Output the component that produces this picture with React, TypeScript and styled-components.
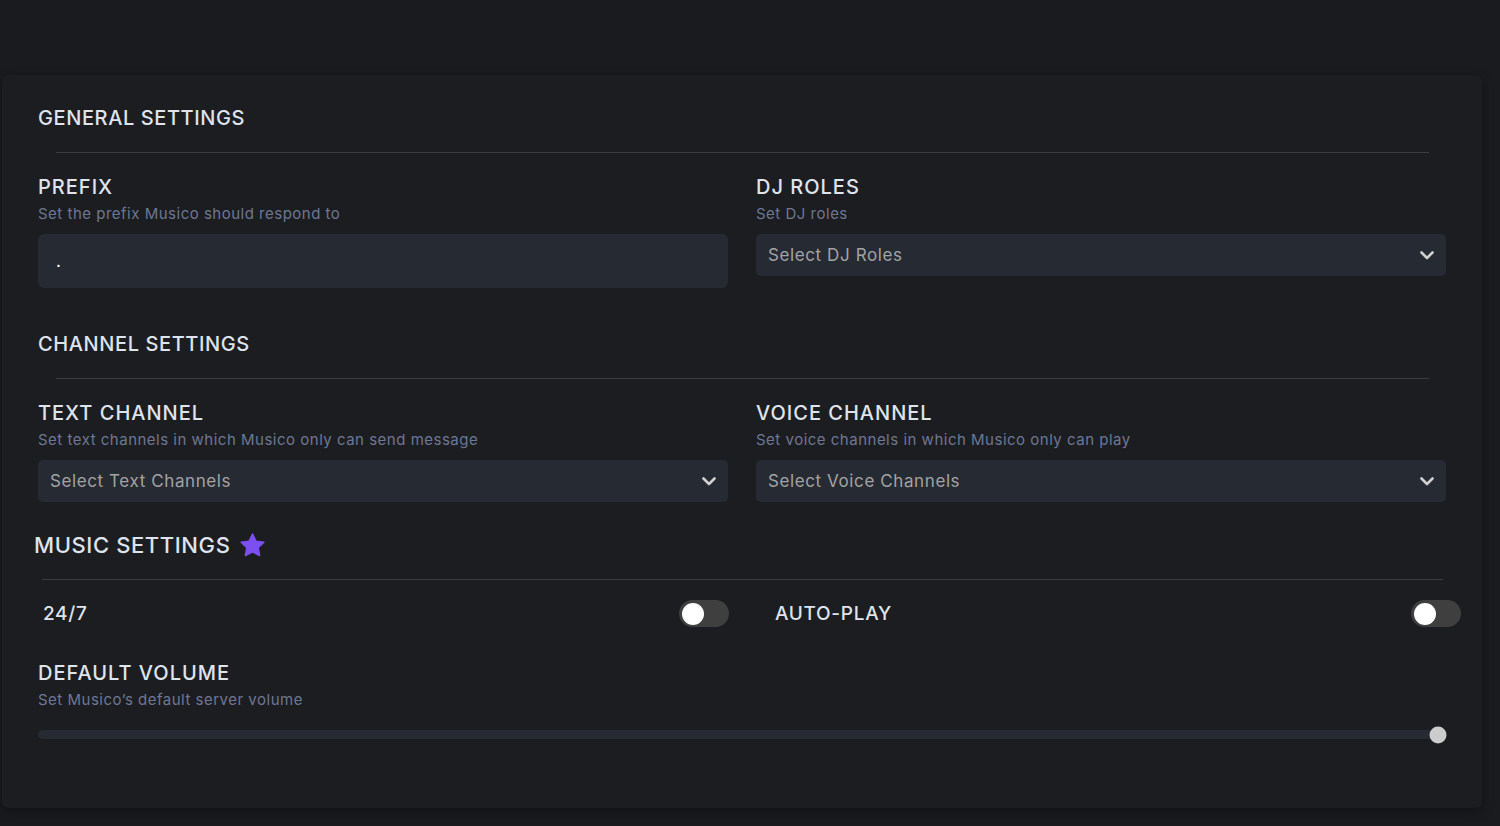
import React from "react";
import styled, { createGlobalStyle } from "styled-components";

const GlobalStyle = createGlobalStyle`
  body {
    margin: 0;
    background: #1a1b1f;
    font-family: "Inter", "Noto Sans", sans-serif;
  }
`;

function Chevron(): JSX.Element {
  return (
    <svg width="14" height="9" viewBox="0 0 14 9" fill="none">
      <path
        d="M1.5 1.5L7 7L12.5 1.5"
        stroke="#d0d0d0"
        strokeWidth="2.6"
        strokeLinecap="round"
        strokeLinejoin="round"
      />
    </svg>
  );
}

function Star(): JSX.Element {
  return (
    <svg width="27" height="27" viewBox="0 0 24 24">
      <path
        d="M12 1.8l3.1 6.4 7 .9-5.1 4.9 1.3 6.9L12 17.6l-6.3 3.3 1.3-6.9-5.1-4.9 7-.9z"
        fill="#7b4ff2"
        stroke="#7b4ff2"
        strokeWidth="1.4"
        strokeLinejoin="round"
      />
    </svg>
  );
}

function Select(props: { placeholder: string }): JSX.Element {
  return (
    <SelectBox>
      <Placeholder>{props.placeholder}</Placeholder>
      <Chevron />
    </SelectBox>
  );
}

function Field(props: {
  label: string;
  hint: string;
  children: React.ReactNode;
}): JSX.Element {
  return (
    <div>
      <FieldLabel>{props.label}</FieldLabel>
      <FieldHint>{props.hint}</FieldHint>
      {props.children}
    </div>
  );
}

export default function App(): JSX.Element {
  return (
    <>
      <GlobalStyle />
      <Page>
        <Card>
          <SectionTitle>GENERAL SETTINGS</SectionTitle>
          <Divider />
          <TwoColumns>
            <Field label="PREFIX" hint="Set the prefix Musico should respond to">
              <PrefixInput defaultValue="." />
            </Field>
            <Field label="DJ ROLES" hint="Set DJ roles">
              <Select placeholder="Select DJ Roles" />
            </Field>
          </TwoColumns>

          <SectionTitle $spaced>CHANNEL SETTINGS</SectionTitle>
          <Divider />
          <TwoColumns>
            <Field
              label="TEXT CHANNEL"
              hint="Set text channels in which Musico only can send message"
            >
              <Select placeholder="Select Text Channels" />
            </Field>
            <Field
              label="VOICE CHANNEL"
              hint="Set voice channels in which Musico only can play"
            >
              <Select placeholder="Select Voice Channels" />
            </Field>
          </TwoColumns>

          <MusicTitle>
            MUSIC SETTINGS
            <Star />
          </MusicTitle>
          <MusicDivider />
          <ToggleRow>
            <ToggleItem>
              <ToggleLabel>24/7</ToggleLabel>
              <Switch />
            </ToggleItem>
            <ToggleItem>
              <ToggleLabel>AUTO-PLAY</ToggleLabel>
              <Switch />
            </ToggleItem>
          </ToggleRow>

          <VolumeField>
            <FieldLabel>DEFAULT VOLUME</FieldLabel>
            <FieldHint>Set Musico’s default server volume</FieldHint>
            <SliderTrack>
              <SliderThumb style={{ left: "100%" }} />
            </SliderTrack>
          </VolumeField>
        </Card>
      </Page>
    </>
  );
}

const Page = styled.div`
  padding: 75px 18px 18px 2px;
`;

const Card = styled.div`
  box-sizing: border-box;
  height: 733px;
  padding: 30px 36px 0 36px;
  border-radius: 6px;

  background: #1c1d21;
  box-shadow: 0 4px 12px rgba(0, 0, 0, 0.35);
`;

const SectionTitle = styled.h2<{ $spaced?: boolean }>`
  margin: ${(p) => (p.$spaced ? "43px" : "0")} 0 0 0;

  font-size: 20px;
  font-weight: 500;
  line-height: 26px;
  letter-spacing: 0.6px;
  color: #dfe3ec;
`;

const Divider = styled.hr`
  margin: 21px 17px 0 18px;
  border: 0;
  border-top: 1px solid #3b3c3f;
`;

const TwoColumns = styled.div`
  display: grid;
  grid-template-columns: 1fr 1fr;
  column-gap: 28px;

  margin-top: 22px;
`;

const FieldLabel = styled.h3`
  margin: 0;

  font-size: 20px;
  font-weight: 500;
  line-height: 24px;
  letter-spacing: 1px;
  color: #dfe3ec;
`;

const FieldHint = styled.p`
  margin: 5px 0 0 0;

  font-size: 15px;
  line-height: 20px;
  letter-spacing: 0.5px;
  color: #6e7793;
`;

const PrefixInput = styled.input`
  box-sizing: border-box;
  display: block;

  width: 100%;
  height: 54px;
  margin-top: 10px;
  padding: 0 18px;
  border: 0;
  border-radius: 6px;
  outline: none;

  font-family: inherit;
  font-size: 17px;
  color: #ffffff;

  background: #262a32;
`;

const SelectBox = styled.div`
  box-sizing: border-box;
  display: flex;
  align-items: center;
  justify-content: space-between;

  height: 42px;
  margin-top: 10px;
  padding: 0 12px 0 12px;
  border-radius: 5px;

  background: #262a32;
`;

const Placeholder = styled.span`
  font-size: 17px;
  letter-spacing: 0.6px;
  color: #a3a3a3;
`;

const MusicTitle = styled.h2`
  display: flex;
  align-items: center;
  gap: 9px;

  margin: 29px 0 0 -4px;

  font-size: 22px;
  font-weight: 500;
  line-height: 28px;
  letter-spacing: 0.6px;
  color: #dfe3ec;
`;

const MusicDivider = styled.hr`
  margin: 20px 3px 0 4px;
  border: 0;
  border-top: 1px solid #3b3c3f;
`;

const ToggleRow = styled.div`
  display: grid;
  grid-template-columns: 1fr 1fr;
  column-gap: 46px;

  margin: 20px -15px 0 5px;
`;

const ToggleItem = styled.div`
  display: flex;
  align-items: center;
  justify-content: space-between;

  height: 27px;
`;

const ToggleLabel = styled.span`
  font-size: 19px;
  font-weight: 500;
  letter-spacing: 0.7px;
  color: #dfe3ec;
`;

const Switch = styled.span`
  position: relative;

  width: 50px;
  height: 27px;
  border-radius: 14px;

  background: #3f3f3f;

  &::after {
    content: "";
    position: absolute;
    top: 2.5px;
    left: 3px;

    width: 22px;
    height: 22px;
    border-radius: 50%;

    background: #ffffff;
  }
`;

const VolumeField = styled.div`
  margin-top: 34px;
`;

const SliderTrack = styled.div`
  position: relative;

  height: 9px;
  margin: 20px 8px 0 0;
  border-radius: 5px;

  background: #262a32;
`;

const SliderThumb = styled.span`
  position: absolute;
  top: 50%;

  width: 17px;
  height: 17px;
  border-radius: 50%;

  background: #cccccc;
  transform: translate(-50%, -50%);
`;
